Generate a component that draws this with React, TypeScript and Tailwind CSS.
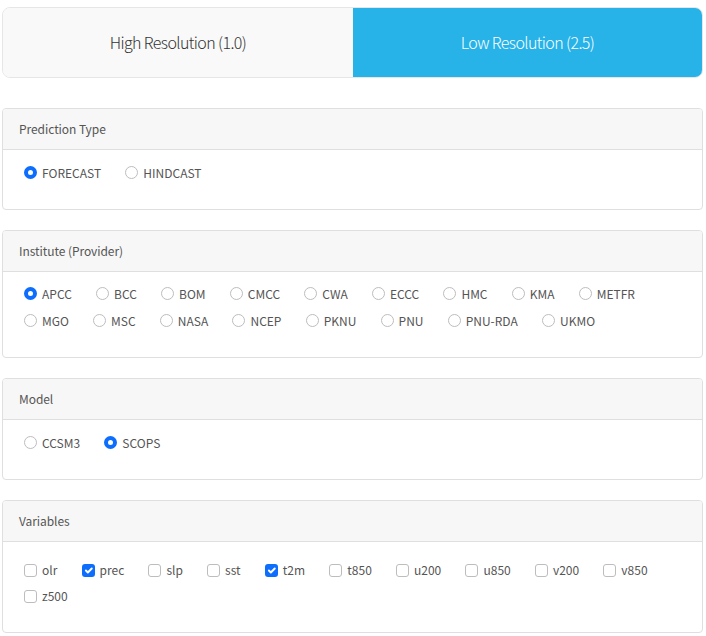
const PREDICTION = ["FORECAST", "HINDCAST"];
const INSTITUTES = ["APCC", "BCC", "BOM", "CMCC", "CWA", "ECCC", "HMC", "KMA", "METFR", "MGO", "MSC", "NASA", "NCEP", "PKNU", "PNU", "PNU-RDA", "UKMO"];
const MODELS = ["CCSM3", "SCOPS"];
const VARIABLES = ["olr", "prec", "slp", "sst", "t2m", "t850", "u200", "u850", "v200", "v850", "z500"];
const CHECKED_VARS = ["prec", "t2m"];

function Radio({ label, on }: { label: string; on?: boolean }) {
  return (
    <label className="flex items-center h-[27px] mr-[24.2px]">
      <span
        className={`w-[13px] h-[13px] rounded-full shrink-0 mr-[5px] ${
          on ? "border-[4px] border-[#0d6efd] bg-white" : "border border-[#bdbdbd] bg-white"
        }`}
      />
      <span>{label}</span>
    </label>
  );
}

function Check({ label, on }: { label: string; on?: boolean }) {
  return (
    <label className="flex items-center h-[26px] mr-[24.2px]">
      <span
        className={`w-[13px] h-[13px] rounded-[3px] shrink-0 mr-[5px] flex items-center justify-center ${
          on ? "bg-[#0d6efd]" : "border border-[#bdbdbd] bg-white"
        }`}
      >
        {on && (
          <svg className="w-[13px] h-[13px]" viewBox="0 0 20 20" fill="none" stroke="#fff" strokeWidth={3} strokeLinecap="round" strokeLinejoin="round">
            <path d="M6 10l3 3l6-6" />
          </svg>
        )}
      </span>
      <span>{label}</span>
    </label>
  );
}

function Card({ title, bodyClass, children }: { title: string; bodyClass: string; children: React.ReactNode }) {
  return (
    <section className="border border-[#dfdfdf] rounded-[4px] bg-white overflow-hidden">
      <div className="h-[41px] flex items-center px-[16px] bg-[#f7f7f7] border-b border-[#dfdfdf] text-[12px] tracking-[-0.06px] text-[#555]">{title}</div>
      <div className={`flex flex-wrap content-start px-[21px] text-[12px] text-[#555] ${bodyClass}`}>{children}</div>
    </section>
  );
}

export default function App() {
  return (
    <div className="w-[706px] h-[636px] bg-white overflow-hidden pt-[7px] pl-[2px] pr-[3px] font-['Noto_Sans_CJK_KR','Noto_Sans',sans-serif]">
      {/* Resolution tabs */}
      <div className="flex h-[71px] rounded-[8px] border border-[#e6e6e6] overflow-hidden text-[16px] font-light tracking-[-0.6px]">
        <div className="w-[350px] pb-[2px] flex items-center justify-center bg-[#f9f9f9] text-[#333]">High Resolution (1.0)</div>
        <div className="flex-1 pb-[2px] flex items-center justify-center bg-[#27b2e8] text-white">Low Resolution (2.5)</div>
      </div>

      <div className="mt-[30px] flex flex-col gap-[20px]">
        <Card title="Prediction Type" bodyClass="h-[59px] pt-[9px]">
          {PREDICTION.map((p, i) => <Radio key={p} label={p} on={i === 0} />)}
        </Card>
        <Card title="Institute (Provider)" bodyClass="h-[85px] pt-[8px]">
          {INSTITUTES.map((p, i) => <Radio key={p} label={p} on={i === 0} />)}
        </Card>
        <Card title="Model" bodyClass="h-[59px] pt-[9px]">
          {MODELS.map((p, i) => <Radio key={p} label={p} on={i === 1} />)}
        </Card>
        <Card title="Variables" bodyClass="h-[90px] pt-[15px]">
          {VARIABLES.map((v) => <Check key={v} label={v} on={CHECKED_VARS.includes(v)} />)}
        </Card>
      </div>
    </div>
  );
}
